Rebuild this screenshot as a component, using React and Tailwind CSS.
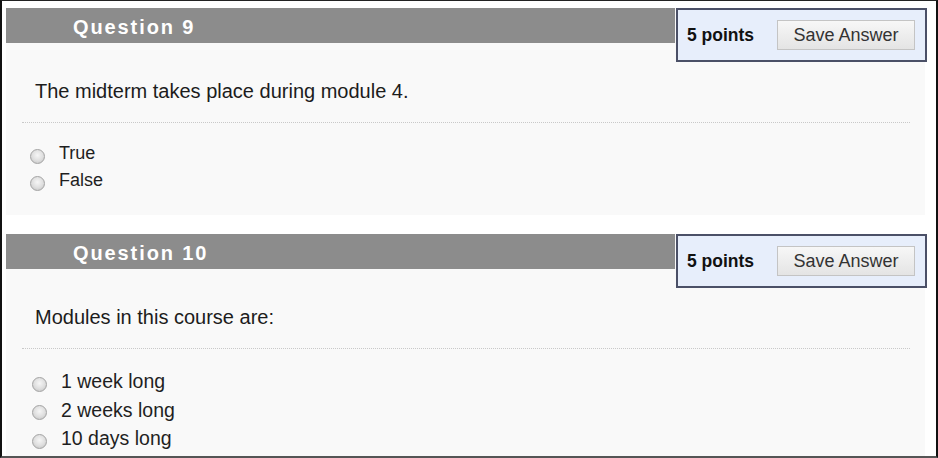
import React from 'react';

const questions = [
    {
        id: 9,
        points: 5,
        prompt: "The midterm takes place during module 4.",
        choices: ["True", "False"],
        optionSize: "text-[18px] leading-[27px]",
        optionGap: "pl-[24px] mt-[17px] pb-[21px]",
    },
    {
        id: 10,
        points: 5,
        prompt: "Modules in this course are:",
        choices: ["1 week long", "2 weeks long", "10 days long"],
        optionSize: "text-[19.5px] leading-[28.5px]",
        optionGap: "pl-[26px] mt-[18px] pb-[21px]",
    },
];

// Greyed-out native-looking radio button
const Radio = () => (
    <span className="block w-[15px] h-[15px] shrink-0 rounded-full border border-[#a3a3a3] bg-[radial-gradient(circle_at_50%_40%,#f6f6f6_0%,#dedede_55%,#bdbdbd_100%)] translate-y-[3px]" />
);

const Question = ({ question }) => {
    return (
        <div className="relative bg-[#f9f9f9]">
            <div className="w-[669px] h-[35px] bg-[#8c8c8c] pl-[67px] pt-[3px]">
                <h3 className="text-white font-bold text-[20px] leading-[32px] tracking-[1.9px]">
                    Question {question.id}
                </h3>
            </div>

            {/* points box hangs down over the question body */}
            <div className="absolute top-0 right-[-2px] w-[251px] h-[54px] border-2 border-[#4b5067] bg-[#e7eefb] flex items-center justify-between pl-[9px] pr-[10px]">
                <span className="font-bold text-[17.5px] text-[#111]">{question.points} points</span>
                <button className="w-[138px] h-[30px] border border-[#c4c4c4] bg-[linear-gradient(#f7f7f7,#e4e4e4)] text-[18px] text-[#333]">
                    Save Answer
                </button>
            </div>

            <p className="pt-[36px] pl-[29px] text-[20px] leading-[24px] text-[#1c1c1c]">
                {question.prompt}
            </p>

            <div className="mt-[19px] ml-[16px] mr-[15px] border-t border-dotted border-[#c9c9c9]" />

            <ul className={question.optionGap}>
                {question.choices.map((choice) => (
                    <li key={choice} className={`flex items-center gap-[14px] text-[#1f1f1f] ${question.optionSize}`}>
                        <Radio />
                        <span>{choice}</span>
                    </li>
                ))}
            </ul>
        </div>
    );
};

export default function App() {
    return (
        <div className="w-[938px] h-[458px] overflow-hidden bg-white border-t border-l-2 border-r-2 border-b-2 border-t-[#222] border-l-[#111] border-r-[#111] border-b-[#555] pt-[7px] pl-[4px] pr-[11px] font-['Liberation_Sans',Arial,sans-serif]">
            <div className="flex flex-col gap-[19px]">
                {questions.map((q) => (
                    <Question key={q.id} question={q} />
                ))}
            </div>
        </div>
    );
}
